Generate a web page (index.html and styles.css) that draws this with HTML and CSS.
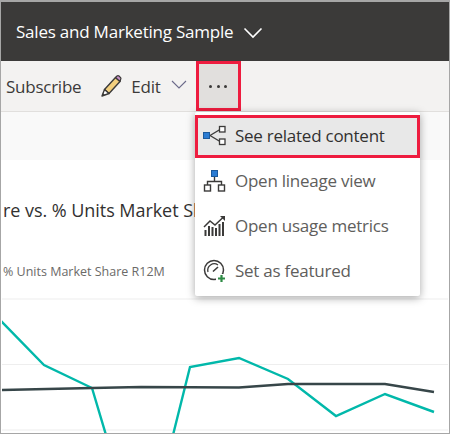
FILE: index.html
```html
<!DOCTYPE html>
<html lang="en">
<head>
<meta charset="utf-8">
<title>Sales and Marketing Sample</title>
<link rel="stylesheet" href="styles.css">
</head>
<body>
<div class="frame">
  <header class="topbar">
    <span class="report-name">Sales and Marketing Sample</span>
    <svg class="top-chevron" width="20" height="12" viewBox="0 0 20 12"><path d="M1.5 1.5 L10 10 L18.5 1.5" fill="none" stroke="#fff" stroke-width="1.6"/></svg>
  </header>
  <nav class="toolbar">
    <span class="tool-text">Subscribe</span>
    <svg class="pencil" width="22" height="24" viewBox="0 0 22 24">
      <path d="M4.5 15.5 L15.5 3.5 L20 7.5 L9 19.5 Z" fill="#f2cf7e" stroke="#3b3a39" stroke-width="1.4" stroke-linejoin="round"/>
      <path d="M15.5 3.5 L17 2 Q18 1.2 19 2 L20.6 3.6 Q21.3 4.6 20.5 5.6 L20 7.5 Z" fill="#c58fc8" stroke="#3b3a39" stroke-width="1.2" stroke-linejoin="round"/>
      <path d="M4.5 15.5 L2 22 L9 19.5 Z" fill="#fff" stroke="#3b3a39" stroke-width="1.4" stroke-linejoin="round"/>
      <path d="M2 22 L2.9 19 L5 21 Z" fill="#3b3a39"/>
    </svg>
    <span class="tool-text edit-label">Edit</span>
    <svg class="edit-chevron" width="16" height="9" viewBox="0 0 16 9"><path d="M1 1 L8 8 L15 1" fill="none" stroke="#6b6a8a" stroke-width="1.1"/></svg>
    <button class="more-button"><span class="dot"></span><span class="dot"></span><span class="dot"></span></button>
  </nav>
  <div class="band"></div>
  <main class="visual">
    <h2 class="visual-title">re vs. % Units Market Share</h2>
    <p class="visual-subtitle">% Units Market Share R12M</p>
    <svg class="chart" width="446" height="141" viewBox="2 293 446 141">
      <g stroke="#eeeeee" stroke-width="1.2">
        <line x1="2" y1="300" x2="448" y2="300"/>
        <line x1="2" y1="365.5" x2="448" y2="365.5"/>
        <line x1="2" y1="431" x2="448" y2="431"/>
      </g>
      <polyline fill="none" stroke="#01b8aa" stroke-width="2.4" points="1,322 44,366 92,389 106,436"/>
      <polyline fill="none" stroke="#01b8aa" stroke-width="2.4" points="173,436 190,368 239,359 288,380 336,417 385,395 434,413"/>
      <polyline fill="none" stroke="#374649" stroke-width="2.4" points="1,391 92,389 141,388 239,388.5 288,385 385,385 434,393"/>
    </svg>
  </main>
  <div class="menu">
    <div class="menu-item is-active">
      <svg class="menu-icon" width="24" height="24" viewBox="0 0 24 24">
        <path d="M7 11.5 L17 5.5 M7 11.5 L17 17.5" stroke="#3b3a39" stroke-width="1.4" fill="none"/>
        <rect x="0.5" y="8.5" width="6" height="6" fill="#2b7cd3" stroke="#1c5a9c"/>
        <rect x="16.5" y="2.5" width="5.5" height="5.5" fill="#fff" stroke="#3b3a39" stroke-width="1.3"/>
        <rect x="16.5" y="15" width="5.5" height="5.5" fill="#fff" stroke="#3b3a39" stroke-width="1.3"/>
      </svg>
      <span>See related content</span>
    </div>
    <div class="menu-item">
      <svg class="menu-icon" width="24" height="24" viewBox="0 0 24 24">
        <path d="M11.5 8 V12.5 M4.5 16 V12.5 H18.500 V16" stroke="#3b3a39" stroke-width="1.4" fill="none"/>
        <rect x="8.500" y="1.500" width="6" height="6" fill="#2b7cd3" stroke="#1c5a9c"/>
        <rect x="1.500" y="16" width="6" height="6" fill="#fff" stroke="#3b3a39" stroke-width="1.4"/>
        <rect x="15.500" y="16" width="6" height="6" fill="#fff" stroke="#3b3a39" stroke-width="1.4"/>
      </svg>
      <span>Open lineage view</span>
    </div>
    <div class="menu-item">
      <svg class="menu-icon" width="24" height="24" viewBox="0 0 24 24">
        <path d="M1 13 L7 7 L12 11 L20.500 3" fill="none" stroke="#3b3a39" stroke-width="1.5"/>
        <path d="M17 2 H22 V7 Z" fill="#3b3a39"/>
        <path d="M2.500 22 V16 M6 22 V12 M9.500 22 V13 M13 22 V14 M16.500 22 V10 M20 22 V8" stroke="#3b3a39" stroke-width="2"/>
      </svg>
      <span>Open usage metrics</span>
    </div>
    <div class="menu-item">
      <svg class="menu-icon" width="24" height="24" viewBox="0 0 24 24">
        <circle cx="11" cy="11" r="9.500" fill="none" stroke="#3b3a39" stroke-width="1.5"/>
        <path d="M5 13 A6.500 6.500 0 0 1 15 6" fill="none" stroke="#3b3a39" stroke-width="1.300"/>
        <path d="M10 12.500 L15 8" stroke="#3b3a39" stroke-width="1.600"/>
        <rect x="13" y="15" width="10" height="9" fill="#fff"/>
        <path d="M18.500 16 V23 M15 19.500 H22" stroke="#2e8b45" stroke-width="2.200"/>
      </svg>
      <span>Set as featured</span>
    </div>
  </div>
</div>
</body>
</html>
```

FILE: styles.css
```css
* { box-sizing: border-box; }
html, body { margin: 0; padding: 0; }
body {
  width: 450px;
  height: 434px;
  overflow: hidden;
  font-family: "Open Sans", "Noto Sans", sans-serif;
}
.frame {
  position: relative;
  width: 450px;
  height: 434px;
  display: flex;
  flex-direction: column;
  overflow: hidden;
  border: 1px solid #a6a6a6;
  border-top-width: 2px;
  background: #fff;
}
.topbar {
  flex: none;
  height: 59px;
  background: #3b3a39;
  display: flex;
  align-items: center;
  padding-left: 15px;
  color: #fff;
}
.report-name { font-size: 17px; letter-spacing: -0.22px; }
.top-chevron { margin-left: 10px; margin-top: 2px; }
.toolbar {
  flex: none;
  height: 51px;
  background: #f3f2f1;
  border-bottom: 1px solid #e1dfdd;
  display: flex;
  align-items: center;
  padding-left: 5px;
  color: #323130;
}
.tool-text { font-size: 17px; letter-spacing: -0.25px; color: #3b3a39; }
.pencil { margin-left: 19px; }
.edit-label { margin-left: 9px; }
.edit-chevron { margin-left: 10px; margin-top: -3px; }
.more-button {
  margin-left: 9px;
  width: 45px;
  height: 50px;
  background: #e1dfdd;
  border: 3px solid #ee1c3f;
  padding: 0;
  display: flex;
  align-items: center;
  justify-content: center;
  gap: 4.5px;
}
.dot { width: 3px; height: 3px; border-radius: 50%; background: #3b3a39; }
.band { flex: none; height: 48px; background: #f9f9f9; }
.visual { flex: 1; min-height: 0; position: relative; padding-left: 2px; overflow: hidden; }
.visual-title {
  margin: 37px 0 0;
  font-size: 18px;
  line-height: 26px;
  font-weight: 400;
  white-space: nowrap;
  letter-spacing: -0.05px;
  color: #323130;
}
.visual-subtitle {
  margin: 41px 0 0;
  font-size: 12.5px;
  line-height: 16px;
  white-space: nowrap;
  color: #6b6a68;
}
.chart { position: absolute; left: 1px; bottom: 0; }
.menu {
  position: absolute;
  left: 194px;
  top: 110px;
  width: 225px;
  height: 184px;
  padding: 3px 0;
  background: #fff;
  border-radius: 2px;
  box-shadow: 0 2px 8px rgba(0, 0, 0, 0.35);
  display: flex;
  flex-direction: column;
}
.menu-item {
  flex: none;
  height: 45px;
  display: flex;
  align-items: center;
  padding-left: 8px;
  font-size: 17px;
  letter-spacing: -0.25px;
  color: #605e5c;
}
.menu-item span { margin-left: 8px; }
.menu-item.is-active {
  height: 43px;
  background: #e8e8e8;
  border: 3px solid #ee1c3f;
  padding-left: 5px;
  padding-bottom: 2px;
  color: #323130;
}
.menu-icon { flex: none; }
```
